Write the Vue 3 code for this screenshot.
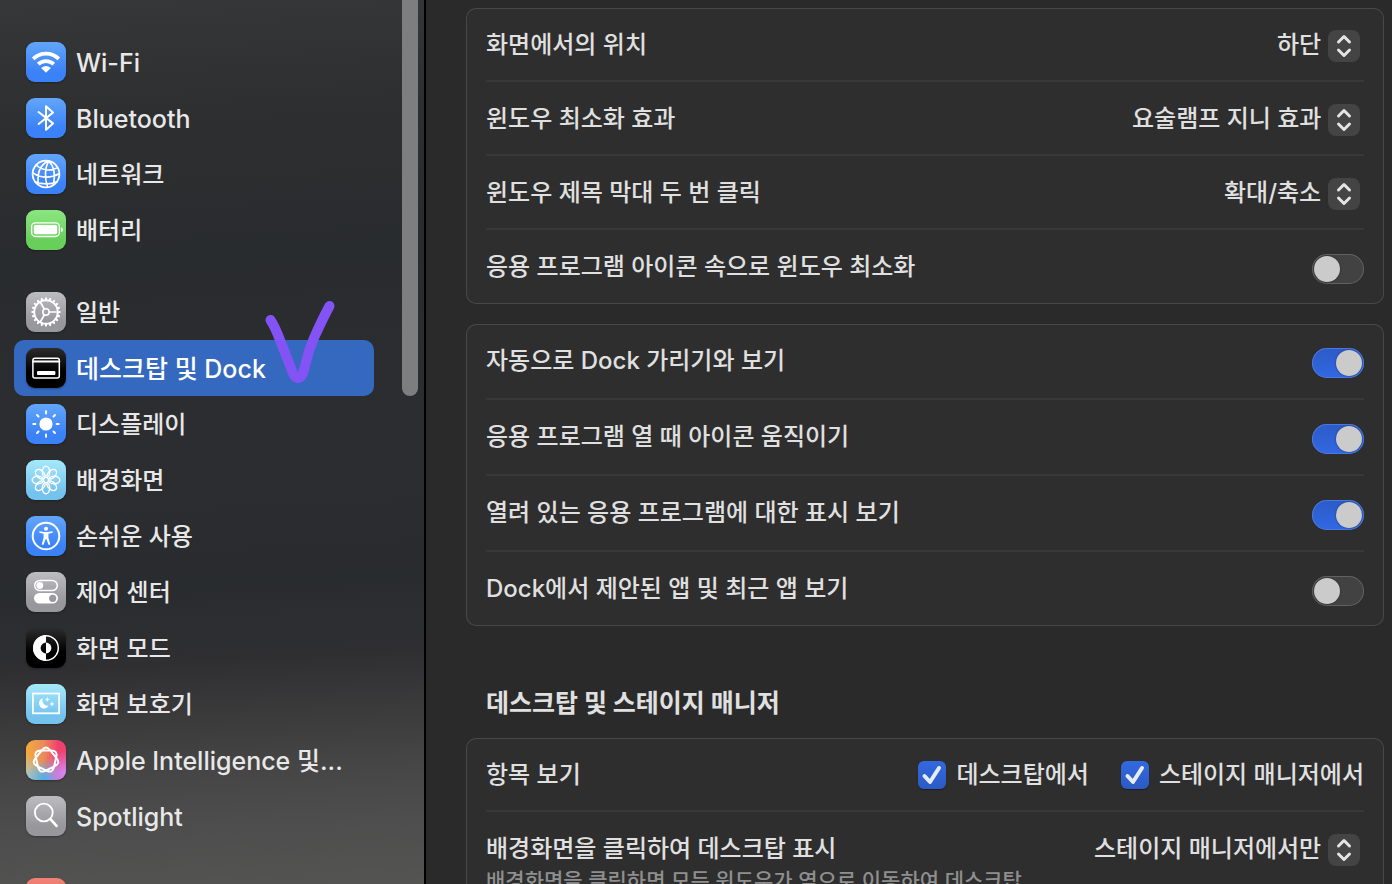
<script setup>
import { ref } from 'vue'

// seven-pointed loop of the Apple Intelligence glyph
const loopPath = () => {
  const points = []
  for (let i = 0; i < 7; i++) {
    const angle = (i * 2 * 2 * Math.PI) / 7 - Math.PI / 2
    points.push([20 + 15 * Math.cos(angle), 20 + 15 * Math.sin(angle)])
  }
  const mix = (a, b, t) => `${(a[0] + (b[0] - a[0]) * t).toFixed(1)} ${(a[1] + (b[1] - a[1]) * t).toFixed(1)}`
  return points.map((p, i) => {
    const prev = points[(i + 6) % 7]
    const next = points[(i + 1) % 7]
    return `${i ? 'L' : 'M'}${mix(p, prev, 0.27)}Q${p[0].toFixed(1)} ${p[1].toFixed(1)} ${mix(p, next, 0.27)}`
  }).join('') + 'Z'
}

const spin = (count, shape) =>
  Array.from({ length: count }, (_, i) => `<g transform="rotate(${(i * 360) / count} 20 20)">${shape}</g>`).join('')

const icons = {
  wifi: '<path d="M7.2 16.8A18.2 18.2 0 0 1 32.8 16.8M12.2 22.2A11.2 11.2 0 0 1 27.8 22.2" stroke-width="3.8" stroke-linecap="butt"/><path class="solid" d="M15.2 26Q20 21.8 24.8 26L20 30.8Z"/>',
  bluetooth: '<path d="M12.6 14L27 25.4L20 31.8V8.2L27 14.6L12.6 26" stroke-width="2"/>',
  network: '<circle cx="20" cy="20" r="13.4" stroke-width="1.8"/><path stroke-width="1.6" d="M22.5 6.8C14 11 10.5 18 12.5 31M22.5 6.8C19 14 18.6 24 21.6 33.2M22.5 6.8C27.8 12 29.6 21 27.4 31M10 11C16 16 24 17.5 31.6 13.6M6.8 18.6C14 24.5 25 24.5 33.3 19.5M9.5 28C16 30.5 25 30.4 30.5 28"/>',
  battery: '<rect x="5.6" y="12.9" width="27.8" height="13.6" rx="4" stroke-width="1.4"/><rect class="solid" x="7.8" y="15.1" width="23.4" height="9.2" rx="2"/><path class="solid" d="M35 17.3Q37 18 37 19.7T35 22.1Z"/>',
  gear: '<circle cx="20" cy="20" r="11.8" stroke-width="2"/><circle cx="20" cy="20" r="3.2" stroke-width="1.6"/>' +
    spin(20, '<path d="M20 8V6.2" stroke-width="2"/>') + spin(3, '<path d="M23.2 20H31.5" stroke-width="1.7"/>'),
  dock: '<rect x="6.9" y="10.3" width="26.4" height="19.8" rx="2" stroke-width="1.5"/><path d="M7 13.6H33.3" stroke-width="2"/><rect class="solid" x="11" y="23" width="18.4" height="4" rx="1"/>',
  display: '<circle class="solid" cx="20" cy="20" r="6.6"/>' + spin(8, '<path d="M20 9.4V7.3" stroke-width="2"/>'),
  wallpaper: spin(8, '<ellipse cx="20" cy="11.9" rx="3.7" ry="5.7" stroke-width="1.5"/>'),
  access: '<circle cx="20" cy="20" r="13.3" stroke-width="2"/><circle class="solid" cx="20" cy="12.8" r="2"/><path class="solid" d="M13.4 15.3L18.4 16H21.6L26.6 15.3V16.7L22.4 17.7V21.5L24.3 28.4L22.7 28.9L20.3 23H19.7L17.3 28.9L15.7 28.4L17.6 21.5V17.7L13.4 16.7Z"/>',
  control: '<rect x="8.7" y="8.4" width="22.6" height="10.2" rx="5.1" stroke-width="1.5"/><circle class="solid" cx="13.8" cy="13.5" r="3.4"/><rect class="solid" x="8" y="21" width="24" height="10.6" rx="5.3"/><circle class="hole" cx="26.7" cy="26.3" r="3.6"/>',
  appearance: '<circle cx="20" cy="20" r="12.3" stroke-width="1.5"/><path class="solid" d="M20 7.2A12.8 12.8 0 0 0 20 32.8V25.4A5.4 5.4 0 0 1 20 14.6Z"/><path class="solid" d="M20 14.6A5.4 5.4 0 0 1 20 25.4Z"/>',
  saver: '<rect x="6.9" y="9.5" width="26.2" height="19.8" stroke-width="1.8" stroke-linejoin="miter"/><path class="solid" d="M16.6 14.3A5.2 5.2 0 1 0 22.8 21.6A5.5 5.5 0 0 1 16.6 14.3Z"/><path class="solid" d="M21.3 13L22 14.8L23.8 15.5L22 16.2L21.3 18L20.6 16.2L18.8 15.5L20.6 14.8ZM26 17.3L26.8 19.3L28.8 20L26.8 20.7L26 22.7L25.2 20.7L23.2 20L25.2 19.3Z"/>',
  intelligence: `<path d="${loopPath()}" stroke-width="2"/>`,
  search: '<circle cx="17.8" cy="16.5" r="8.9" stroke-width="1.9"/><path d="M24.4 23.2L30.6 29.8" stroke-width="2.7"/>',
  none: ''
}

const groups = [
  [
    { name: 'Wi-Fi', icon: 'wifi', color: 'blue', latin: true },
    { name: 'Bluetooth', icon: 'bluetooth', color: 'blue', latin: true },
    { name: '네트워크', icon: 'network', color: 'blue' },
    { name: '배터리', icon: 'battery', color: 'green' }
  ],
  [
    { name: '일반', icon: 'gear', color: 'gray' },
    { name: '데스크탑 및 Dock', icon: 'dock', color: 'black', latin: true },
    { name: '디스플레이', icon: 'display', color: 'blue' },
    { name: '배경화면', icon: 'wallpaper', color: 'cyan' },
    { name: '손쉬운 사용', icon: 'access', color: 'blue' },
    { name: '제어 센터', icon: 'control', color: 'gray' },
    { name: '화면 모드', icon: 'appearance', color: 'black' },
    { name: '화면 보호기', icon: 'saver', color: 'cyan' },
    { name: 'Apple Intelligence 및...', icon: 'intelligence', color: 'rainbow', latin: true },
    { name: 'Spotlight', icon: 'search', color: 'gray', latin: true }
  ],
  [
    { name: '', icon: 'none', color: 'red' }
  ]
]

const selected = ref('데스크탑 및 Dock')

const menus = [
  { id: 'position', label: '화면에서의 위치', value: '하단' },
  { id: 'effect', label: '윈도우 최소화 효과', value: '요술램프 지니 효과' },
  { id: 'titlebar', label: '윈도우 제목 막대 두 번 클릭', value: '확대/축소' }
]

const minimize = ref(false)

const switches = ref([
  { id: 'autohide', label: '자동으로 Dock 가리기와 보기', on: true },
  { id: 'bounce', label: '응용 프로그램 열 때 아이콘 움직이기', on: true },
  { id: 'indicator', label: '열려 있는 응용 프로그램에 대한 표시 보기', on: true },
  { id: 'recent', label: 'Dock에서 제안된 앱 및 최근 앱 보기', on: false }
])

const showItems = ref([
  { label: '데스크탑에서', on: true },
  { label: '스테이지 매니저에서', on: true }
])
</script>

<template>
  <div class="window">
    <aside class="sidebar">
      <nav>
        <ul v-for="(group, index) in groups" :key="index">
          <li v-for="item in group" :key="item.icon">
            <button
              type="button"
              class="item"
              :class="{ active: item.name === selected, latin: item.latin }"
              @click="selected = item.name"
            >
              <svg class="icon" :class="item.color" viewBox="0 0 40 40" aria-hidden="true" v-html="icons[item.icon]"></svg>
              <span>{{ item.name }}</span>
            </button>
          </li>
        </ul>
      </nav>
      <div class="scrollbar"></div>
      <svg class="pen" viewBox="0 0 80 96" aria-hidden="true">
        <path d="M8.500 22C13 29 15 34 18 42L27 65C30 73 32 80 36 80S41 76 44 64C46 55 48 49 52 40C56 31 61 20 67.500 8" />
      </svg>
    </aside>

    <main class="content">
      <section class="card">
        <div v-for="menu in menus" :key="menu.id" class="row">
          <label :for="menu.id">{{ menu.label }}</label>
          <div class="menu">
            <select :id="menu.id">
              <option>{{ menu.value }}</option>
            </select>
            <svg viewBox="0 0 32 32" aria-hidden="true"><path d="M10.5 12L16 6.5L21.5 12M10.5 20L16 25.5L21.5 20" /></svg>
          </div>
        </div>
        <div class="row tall">
          <label for="minimize">응용 프로그램 아이콘 속으로 윈도우 최소화</label>
          <input id="minimize" v-model="minimize" class="switch" type="checkbox" role="switch" />
        </div>
      </section>

      <section class="card">
        <div v-for="item in switches" :key="item.id" class="row tall">
          <label :for="item.id">{{ item.label }}</label>
          <input :id="item.id" v-model="item.on" class="switch" type="checkbox" role="switch" />
        </div>
      </section>

      <h2>데스크탑 및 스테이지 매니저</h2>

      <section class="card">
        <div class="row">
          <span>항목 보기</span>
          <div class="checks">
            <label v-for="item in showItems" :key="item.label" class="check">
              <span class="box">
                <input v-model="item.on" type="checkbox" />
                <svg v-if="item.on" viewBox="0 0 28 28" aria-hidden="true"><path d="M6.5 15L12 21L21 7" /></svg>
              </span>
              {{ item.label }}
            </label>
          </div>
        </div>
        <div class="row">
          <div>
            <label for="reveal">배경화면을 클릭하여 데스크탑 표시</label>
            <p class="hint">배경화면을 클릭하면 모든 윈도우가 옆으로 이동하여 데스크탑</p>
          </div>
          <div class="menu">
            <select id="reveal">
              <option>스테이지 매니저에서만</option>
            </select>
            <svg viewBox="0 0 32 32" aria-hidden="true"><path d="M10.5 12L16 6.5L21.5 12M10.5 20L16 25.5L21.5 20" /></svg>
          </div>
        </div>
      </section>
    </main>
  </div>
</template>

<style>
body {
  margin: 0;
  background: #2a2a2a;
}
</style>

<style scoped>
* {
  box-sizing: border-box;
}

.window {
  display: flex;
  height: 100vh;
  overflow: hidden;
  color: #e0e0e0;
  font-family: Inter, "Noto Sans CJK KR", sans-serif;
  font-size: 24px;
  font-weight: 500;
  line-height: 38px;
}

/* sidebar */
.sidebar {
  position: relative;
  flex: none;
  width: 426px;
  padding: 34px 50px 0 14px;
  border-right: 2px solid #000;
  overflow: hidden;
  background: linear-gradient(177deg, #363738 0%, #2d2f30 13%, #292c2e 30%, #2c2d30 48%, #292c2e 66%, #2f2f32 74%, #3a3a3b 80%, #454545 86%, #4c4d4c 92%, #545453 100%);
}

ul {
  margin: 0 0 26px;
  padding: 0;
  list-style: none;
}

.item {
  display: flex;
  align-items: center;
  gap: 10px;
  width: 100%;
  height: 56px;
  padding: 0 12px;
  border: 0;
  border-radius: 10px;
  background: none;
  color: #e8e8e8;
  font: inherit;
  text-align: left;
  white-space: nowrap;
}

.item span {
  padding-top: 2px;
}

.item.latin {
  font-size: 25px;
}

.item.active {
  background: #3569bf;
  color: #fff;
}

.icon {
  flex: none;
  width: 40px;
  height: 40px;
  border-radius: 9px;
  fill: none;
  stroke: #fff;
  stroke-linecap: round;
  stroke-linejoin: round;
  box-shadow: 0 1px 2px rgba(0, 0, 0, 0.3);
}

.icon :deep(.solid) {
  fill: #fff;
  stroke: none;
}

.icon :deep(.hole) {
  fill: #99989d;
  stroke: none;
}

.blue {
  background: linear-gradient(#62a6fa, #3b82f8 75%);
}

.green {
  background: linear-gradient(#8ce782, #68cf5b 75%);
}

.gray {
  background: linear-gradient(#bdbcc1, #98979c 75%);
}

.black {
  background: linear-gradient(#2c2c2c, #000 60%);
}

.cyan {
  background: linear-gradient(#a5e9fb, #74c2ee 80%);
}

.red {
  background: linear-gradient(#f08377, #e9574b);
}

.rainbow {
  background:
    radial-gradient(circle at 100% 85%, #d48cff, transparent 45%),
    radial-gradient(circle at 50% 100%, #38b4f8, transparent 45%),
    radial-gradient(circle at 0 100%, #9bcde5, transparent 45%),
    linear-gradient(90deg, #f3ac3c, #e98a5b 45%, #ef416f 80%);
}

.scrollbar {
  position: absolute;
  top: -10px;
  right: 6px;
  width: 16px;
  height: 406px;
  border-radius: 8px;
  background: #7d7e80;
}

.pen {
  position: absolute;
  top: 298px;
  left: 262px;
  width: 80px;
  height: 96px;
  fill: none;
  stroke: #8353f5;
  stroke-width: 10;
  stroke-linecap: round;
  stroke-linejoin: round;
  pointer-events: none;
}

/* content */
.content {
  flex: 1;
  min-width: 0;
  padding: 8px 8px 0 40px;
  background: #2a2a2a;
}

.card {
  margin-bottom: 20px;
  padding: 0 20px;
  border-radius: 10px;
  background: #2e2e2e;
  box-shadow: inset 0 0 0 1px #484848;
}

.row {
  display: flex;
  align-items: flex-start;
  justify-content: space-between;
  padding: 18px 0 16px;
  border-bottom: 2px solid #383838;
}

.row.tall {
  padding: 18px 0;
}

.row:last-child {
  border-bottom: 0;
}

h2 {
  margin: 58px 20px 16px;
  font-size: 25px;
  font-weight: 700;
  line-height: 38px;
}

.hint {
  margin: 0;
  color: #8f8f8f;
  font-size: 21px;
  line-height: 26px;
}

.menu {
  display: grid;
  height: 38px;
  padding-right: 4px;
}

.menu select {
  grid-area: 1 / 1;
  appearance: none;
  height: 38px;
  padding: 0 38px 0 0;
  border: 0;
  background: none;
  color: inherit;
  font: inherit;
  line-height: 38px;
}

.menu svg {
  grid-area: 1 / 1;
  place-self: start end;
  width: 32px;
  height: 32px;
  margin-top: 4px;
  border-radius: 8px;
  background: #444;
  fill: none;
  stroke: #e4e4e4;
  stroke-width: 3;
  stroke-linecap: round;
  stroke-linejoin: round;
  pointer-events: none;
}

.switch {
  appearance: none;
  flex: none;
  width: 52px;
  height: 30px;
  margin: 6px 0 0;
  padding: 2px;
  border-radius: 15px;
  background: #424242;
  box-shadow: inset 0 0 0 1px #616161;
}

.switch::before {
  content: "";
  display: block;
  width: 26px;
  height: 26px;
  border-radius: 13px;
  background: #cbcbcb;
  box-shadow: 0 0 2px rgba(0, 0, 0, 0.5);
}

.switch:checked {
  background: linear-gradient(#2c5bc8, #3268e2);
  box-shadow: inset 0 0 0 1px #4a78dc;
}

.switch:checked::before {
  margin-left: auto;
}

.checks {
  display: flex;
  gap: 32px;
}

.check {
  display: flex;
  align-items: center;
  gap: 10px;
}

.box {
  display: grid;
}

.box input {
  grid-area: 1 / 1;
  appearance: none;
  width: 28px;
  height: 28px;
  margin: 0;
  border-radius: 6px;
  background: #444;
  box-shadow: 0 1px 1px rgba(0, 0, 0, 0.4);
}

.box input:checked {
  background: linear-gradient(#3369e0, #2b5ac4);
}

.box svg {
  grid-area: 1 / 1;
  width: 28px;
  height: 28px;
  fill: none;
  stroke: #e6ebfa;
  stroke-width: 4;
  stroke-linecap: round;
  stroke-linejoin: round;
  pointer-events: none;
}
</style>
